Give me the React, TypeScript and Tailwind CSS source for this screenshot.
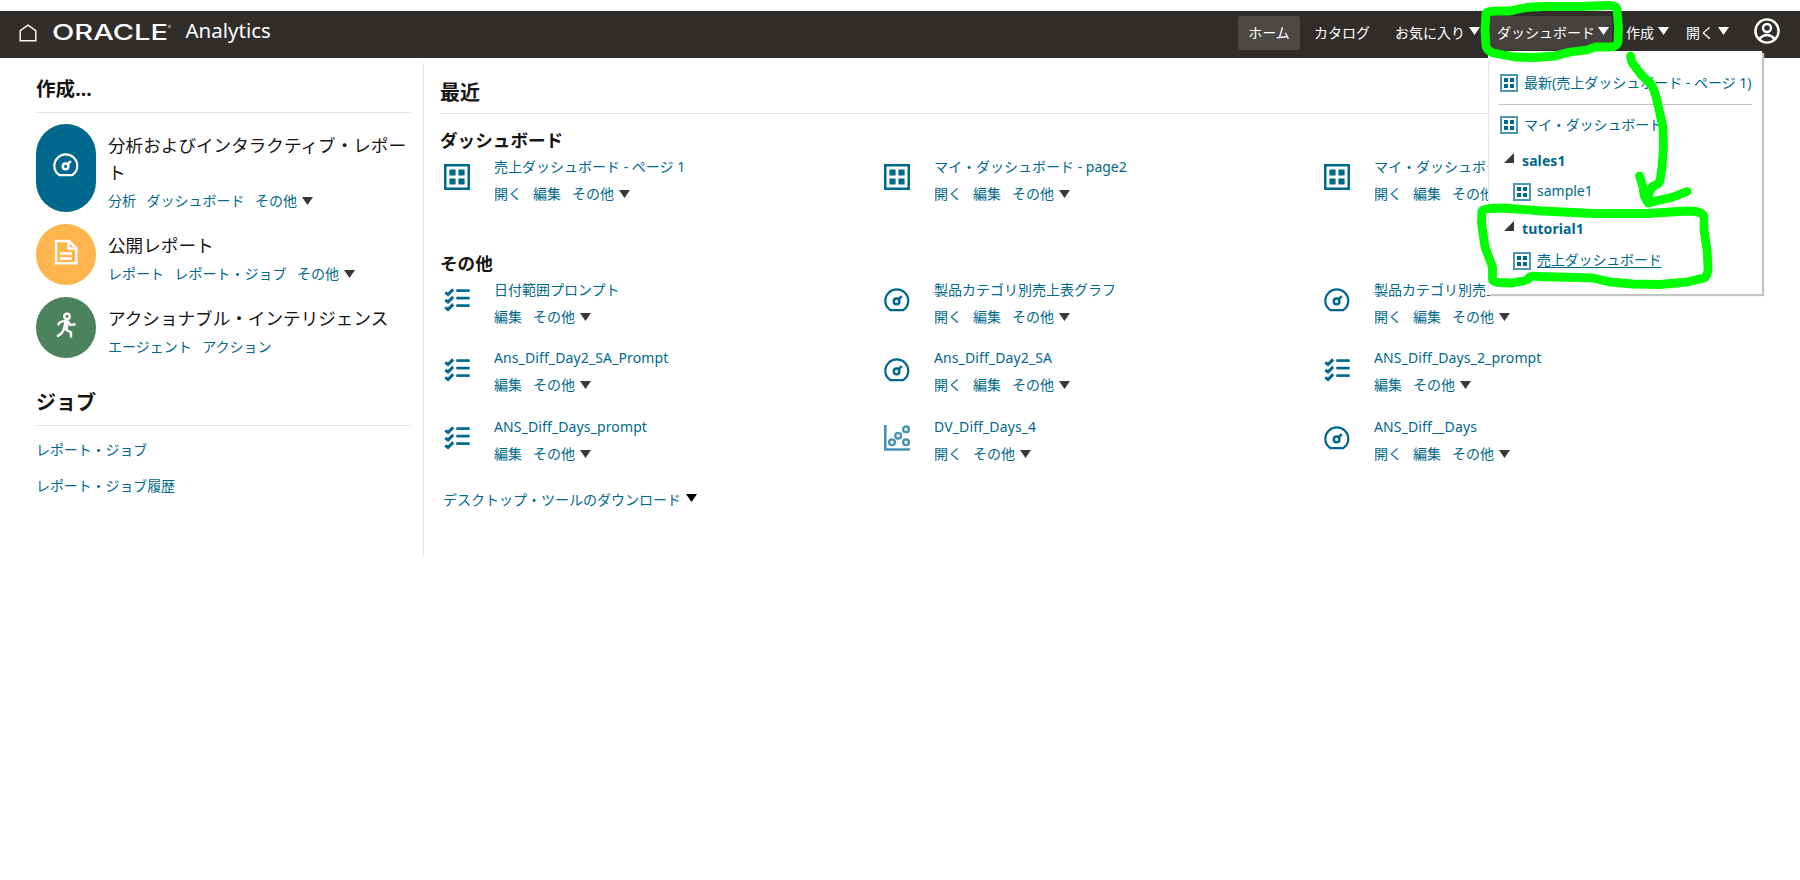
import React from 'react';

type IconName = 'grid' | 'check' | 'gauge' | 'scatter';

function Gauge({ className = '' }: { className?: string }) {
  return (
    <svg viewBox="0 0 26 24" className={`h-6 w-[26px] shrink-0 ${className}`} fill="none" stroke="currentColor" strokeWidth="2.2">
      <path d="M6.6 22.2C3.2 20.1 1.3 16.7 1.3 12.8A11.5 11.5 0 0 1 24.3 12.8C24.3 16.7 22.4 20.1 19 22.2Z" strokeLinejoin="round" />
      <circle cx="12.6" cy="13.4" r="2.8" strokeWidth="2.5" />
      <path d="M14.6 11.2L17.9 8.2" strokeWidth="2.5" />
    </svg>
  );
}

function Grid() {
  return (
    <svg viewBox="0 0 26 26" className="h-[26px] w-[26px] shrink-0" fill="currentColor">
      <path d="M0 0H26V26H0ZM2.5 2.5V23.5H23.5V2.5Z" fillRule="evenodd" />
      <path d="M5.4 5.4h6.2v6.2h-6.2zM14.4 5.4h6.2v6.2h-6.2zM5.4 14.4h6.2v6.2h-6.2zM14.4 14.4h6.2v6.2h-6.2z" />
    </svg>
  );
}

function SmallGrid() {
  return (
    <svg viewBox="0 0 18 18" className="h-[18px] w-[18px] shrink-0">
      <rect x="1" y="1" width="16" height="16" fill="none" stroke="#4e97b2" strokeWidth="2" />
      <path d="M4 4h4v4H4zM10 4h4v4h-4zM4 10h4v4H4zM10 10h4v4h-4z" fill="#00688c" />
    </svg>
  );
}

function Checks() {
  return (
    <svg viewBox="0 0 26 24" className="h-6 w-[26px] shrink-0" fill="none" stroke="currentColor">
      {[0, 7.5, 15].map((y) => (
        <g key={y} transform={`translate(0 ${y})`}>
          <path d="M1.3 4.4L4 6.6L9.2 1.4" strokeWidth="3" />
          <path d="M12.3 2.6H25.7" strokeWidth="2.7" />
        </g>
      ))}
    </svg>
  );
}

function Scatter() {
  return (
    <svg viewBox="0 0 26 26" className="h-[26px] w-[26px] shrink-0 text-[#4594b3]" fill="none" stroke="currentColor" strokeWidth="2.3">
      <path d="M1.3 0V24.5H26" strokeWidth="2.6" />
      <circle cx="8" cy="17.2" r="2.9" />
      <circle cx="14.2" cy="10.8" r="2.9" />
      <circle cx="22" cy="4.3" r="2.9" />
      <circle cx="22" cy="17.2" r="2.9" />
    </svg>
  );
}

function Down({ className = 'text-[#3b3733]' }: { className?: string }) {
  return (
    <svg viewBox="0 0 11 8" className={`h-2 w-[11px] shrink-0 ${className}`} fill="currentColor">
      <path d="M0 0H11L5.5 8Z" />
    </svg>
  );
}

function Actions({ items, more = true, gap = 'gap-[11px]' }: { items: string[]; more?: boolean; gap?: string }) {
  return (
    <div className={`flex h-[27px] items-center whitespace-nowrap ${gap}`}>
      {items.map((t) => (
        <a key={t}>{t}</a>
      ))}
      {more && (
        <span className="flex items-center gap-[5px]">
          <a>その他</a>
          <Down />
        </span>
      )}
    </div>
  );
}

const open = ['開く', '編集'];
const edit = ['編集'];

function Item({ icon, title, actions, iconPad = 'pt-[22px]', latin = false }: { icon: IconName; title: string; actions: string[]; iconPad?: string; latin?: boolean }) {
  return (
    <div className="flex w-[440px] shrink-0 gap-6">
      <div className={`flex h-[26px] items-center text-[#00688c] ${iconPad}`}>
        {icon === 'grid' && <Grid />}
        {icon === 'check' && <Checks />}
        {icon === 'gauge' && <Gauge />}
        {icon === 'scatter' && <Scatter />}
      </div>
      <div>
        <div className={`flex h-[27px] items-center whitespace-nowrap ${latin ? 'tracking-[0.12px]' : ''}`}>
          <a>{title}</a>
        </div>
        <Actions items={actions} />
      </div>
    </div>
  );
}

function Header() {
  return (
    <header className="flex h-[47px] bg-[#312d2a] text-sm text-white">
      <svg viewBox="0 0 18 18" className="ml-[19px] mt-[13px] h-[18px] w-[18px]" fill="none" stroke="#fff" strokeWidth="1.4">
        <path d="M1.2 16.8V6.6L9 1.2L16.8 6.6V16.8Z" />
      </svg>
      <svg viewBox="0 0 120 20" className="ml-[15px] mt-3 h-5 w-[120px] overflow-visible" fill="#fff">
        <text x="0" y="17.4" textLength="116" lengthAdjust="spacingAndGlyphs" fontFamily="Inter, sans-serif" fontWeight="500" fontSize="21">ORACLE</text>
        <circle cx="117.5" cy="3.5" r="1.2" fill="none" stroke="#fff" strokeWidth="0.6" />
      </svg>
      <div className="ml-[13.5px] mt-[5px] text-[20.5px] leading-7">Analytics</div>
      <nav className="ml-auto flex h-[34px] pt-[5px]">
        <a className="mr-[14px] flex h-[34px] w-[62px] items-center justify-center rounded-[3px] bg-[#4b4845]">ホーム</a>
        <a className="mr-[25px] flex h-[34px] items-center">カタログ</a>
        <a className="mr-[7px] flex h-[34px] items-center gap-[4px]">お気に入り<Down className="mb-1 text-white" /></a>
        <a className="mr-[14px] flex h-[34px] w-[125px] items-center gap-[3px] rounded-[3px] bg-[#45413e] pl-[10px]">ダッシュボード<Down className="mb-1 text-white" /></a>
        <a className="mr-[17px] flex h-[34px] items-center gap-[4px]">作成<Down className="mb-1 text-white" /></a>
        <a className="mr-[25px] flex h-[34px] items-center gap-[4px]">開く<Down className="mb-1 text-white" /></a>
      </nav>
      <svg viewBox="0 0 26 26" className="mr-[20px] mt-[7px] h-[26px] w-[26px]" fill="none" stroke="#fff" strokeWidth="2.4">
        <circle cx="13" cy="13" r="11.6" />
        <circle cx="13" cy="10" r="4" />
        <path d="M5.5 20.5Q13 13.5 20.5 20.5" />
      </svg>
    </header>
  );
}

function Folder({ name }: { name: string }) {
  return (
    <div className="flex h-[26px] items-center font-bold">
      <svg viewBox="0 0 10 10" className="mb-[9px] ml-[15px] mr-[8px] h-[10px] w-[10px]" fill="#3b3733">
        <path d="M0 10H10V0Z" />
      </svg>
      <span className="pb-[2px] tracking-[0.1px]">{name}</span>
    </div>
  );
}

function Menu() {
  return (
    <div className="absolute left-[1488px] top-[51px] h-[243px] w-[274px] border-l border-[#e4e8ec] bg-white text-[#00688c] shadow-[2px_2px_1px_#c4c4c4]">
      <div className="flex h-[53px] items-center gap-[6px] whitespace-nowrap pl-[11px] pt-[11px]">
        <SmallGrid />
        <a>最新(売上ダッシュボード - ページ 1)</a>
      </div>
      <div className="ml-[10px] h-px w-[253px] bg-[#c4c4c4]" />
      <div className="flex h-[40px] items-center gap-[6px] pl-[11px]">
        <SmallGrid />
        <a className="-tracking-[0.1px]">マイ・ダッシュボード</a>
      </div>
      <div className="pt-[4px]"><Folder name="sales1" /></div>
      <div className="flex h-[34px] items-center gap-[6px] pl-[24px]">
        <SmallGrid />
        <a className="pb-[3px]">sample1</a>
      </div>
      <div className="pt-[8px]"><Folder name="tutorial1" /></div>
      <div className="flex h-[36px] items-center gap-[6px] pl-[24px]">
        <SmallGrid />
        <a className="pb-[3px] -tracking-[0.15px] underline underline-offset-2">売上ダッシュボード</a>
      </div>
    </div>
  );
}

function Marks() {
  return (
    <svg viewBox="0 0 1800 880" className="pointer-events-none absolute left-0 top-0 h-[880px] w-[1800px]" fill="none" stroke="#00ff00" strokeWidth="8.8" strokeLinecap="round" strokeLinejoin="round">
      <path d="M1486 13Q1488 11 1500 11H1510L1526 7.5L1543 6.5H1580L1607 5.5Q1616 5 1617 9L1618.5 27L1618 42Q1617 47 1610 47H1595L1587 50L1570 52L1555 56L1535 57.5L1515 57L1493 53Q1487 51 1486 46L1485 30Z" />
      <path d="M1630.5 56L1632 62.5L1641.5 75L1651 84Q1655 91 1657.5 103L1663 127L1663.5 147L1662 167L1660 181Q1658 185 1653 186L1649 193L1648 203M1639.5 176L1643 187L1644 195L1648 203L1673 197L1687 191.5" />
      <path d="M1482 211Q1483 208 1503 208L1543 211L1593 213.5H1647L1687 211Q1703 211 1704 217V230L1707 250L1708 267Q1708 276 1704 278L1687 282L1660 284.5L1633 284L1610 282L1593 278L1577 277.5L1537 276.5Q1530 275 1527 280L1512 283L1498 282.5Q1492 282 1492.5 278V267L1485 247L1481.5 223Z" />
    </svg>
  );
}

function Create({ color, height, iconPad, icon, title, links, more, pad }: { color: string; height: string; iconPad: string; icon: React.ReactNode; title: string; links: string[]; more?: boolean; pad: string }) {
  return (
    <div className={`flex ${height}`}>
      <div className={`mr-[12px] flex w-[60px] shrink-0 items-center justify-center rounded-[30px] text-white ${color} ${iconPad}`}>{icon}</div>
      <div className={pad}>
        <div className="text-[17.6px] leading-[27px] text-[#161513]">{title}</div>
        <div className="pt-px"><Actions items={links} more={more} gap="gap-[10.5px]" /></div>
      </div>
    </div>
  );
}

export default function App() {
  return (
    <div className="relative h-[880px] w-[1800px] overflow-hidden bg-white pt-[11px] font-['Noto_Sans','Noto_Sans_CJK_JP',sans-serif] text-sm text-[#00688c]">
      <Header />
      <div className="flex">
        <aside className="w-[423px] shrink-0 pl-9 pr-3 pt-[15px]">
          <h2 className="flex h-8 items-center text-[19.6px] font-bold text-[#161513]">作成...</h2>
          <div className="mb-[11px] mt-[7px] h-px bg-[#e4e3e2]" />
          <div className="flex flex-col gap-3">
            <Create color="bg-[#00688c]" height="h-[88px]" iconPad="pb-[6px]" pad="pt-[8px]" icon={<Gauge />} title="分析およびインタラクティブ・レポート" links={['分析', 'ダッシュボード']} />
            <Create
              color="bg-[#ffb54d]" height="h-[61px]" iconPad="pb-[5px]" pad="pt-[8px]" title="公開レポート" links={['レポート', 'レポート・ジョブ']}
              icon={
                <svg viewBox="0 0 24 26" className="h-[26px] w-6" fill="none" stroke="currentColor" strokeWidth="2.5">
                  <path d="M2 2H15L22.3 9V24.3H2Z" />
                  <path d="M14.5 2V9.5H22M6 14.6H18M6 19.4H18" />
                </svg>
              }
            />
            <Create
              color="bg-[#4c825c]" height="h-[61px]" iconPad="pb-[5px]" pad="pt-[8px]" title="アクショナブル・インテリジェンス" links={['エージェント', 'アクション']} more={false}
              icon={
                <svg viewBox="0 0 20 26" className="h-[26px] w-5" fill="none" stroke="currentColor" strokeWidth="2.4">
                  <circle cx="11" cy="4.3" r="2.7" />
                  <path d="M1.8 13L4.3 10Q8 8.5 12 9.5L14.5 13L19.6 12.2" />
                  <path d="M9.5 10L8 16.5L15 20.5V25.5M8 16.5Q7 21.5 1 24.3M12 9.5L10.5 17" />
                </svg>
              }
            />
          </div>
          <h2 className="mt-[29px] flex h-8 items-center text-[20px] font-bold text-[#161513]">ジョブ</h2>
          <div className="mt-[6px] h-px bg-[#e4e3e2]" />
          <div className="flex flex-col pt-[6px]">
            <a className="flex h-9 items-center -tracking-[0.1px]">レポート・ジョブ</a>
            <a className="flex h-9 items-center -tracking-[0.1px]">レポート・ジョブ履歴</a>
          </div>
        </aside>
        <main className="mt-[5px] h-[493px] w-[1339px] shrink-0 border-l border-[#e4e3e2] pl-4 pt-[14px]">
          <h2 className="flex h-8 items-center text-[20px] font-bold text-[#161513]">最近</h2>
          <div className="mt-[4px] h-px w-[1300px] bg-[#e4e3e2]" />
          <h3 className="mt-[14px] flex h-[25px] items-center text-[17.6px] font-bold text-[#161513]">ダッシュボード</h3>
          <div className="ml-1 flex">
            <Item icon="grid" title="売上ダッシュボード - ページ 1" actions={open} />
            <Item icon="grid" title="マイ・ダッシュボード - page2" actions={open} />
            <Item icon="grid" title="マイ・ダッシュボード" actions={open} />
          </div>
          <h3 className="mt-[45px] flex h-[24px] items-center text-[17.6px] font-bold text-[#161513]">その他</h3>
          <div className="ml-1 flex h-[68px]">
            <Item icon="check" title="日付範囲プロンプト" actions={edit} />
            <Item icon="gauge" title="製品カテゴリ別売上表グラフ" actions={open} />
            <Item icon="gauge" title="製品カテゴリ別売上" actions={open} />
          </div>
          <div className="ml-1 flex h-[69px]">
            <Item icon="check" iconPad="pt-[26px]" latin title="Ans_Diff_Day2_SA_Prompt" actions={edit} />
            <Item icon="gauge" iconPad="pt-[26px]" latin title="Ans_Diff_Day2_SA" actions={open} />
            <Item icon="check" iconPad="pt-[26px]" latin title="ANS_Diff_Days_2_prompt" actions={edit} />
          </div>
          <div className="ml-1 flex h-[68px]">
            <Item icon="check" iconPad="pt-[24px]" latin title="ANS_Diff_Days_prompt" actions={edit} />
            <Item icon="scatter" iconPad="pt-[24px]" latin title="DV_Diff_Days_4" actions={['開く']} />
            <Item icon="gauge" iconPad="pt-[24px]" latin title="ANS_Diff__Days" actions={open} />
          </div>
          <div className="ml-[3px] mt-[9px] flex items-center gap-[5px]">
            <a>デスクトップ・ツールのダウンロード</a>
            <Down className="mb-1 text-black" />
          </div>
        </main>
      </div>
      <Menu />
      <Marks />
    </div>
  );
}
